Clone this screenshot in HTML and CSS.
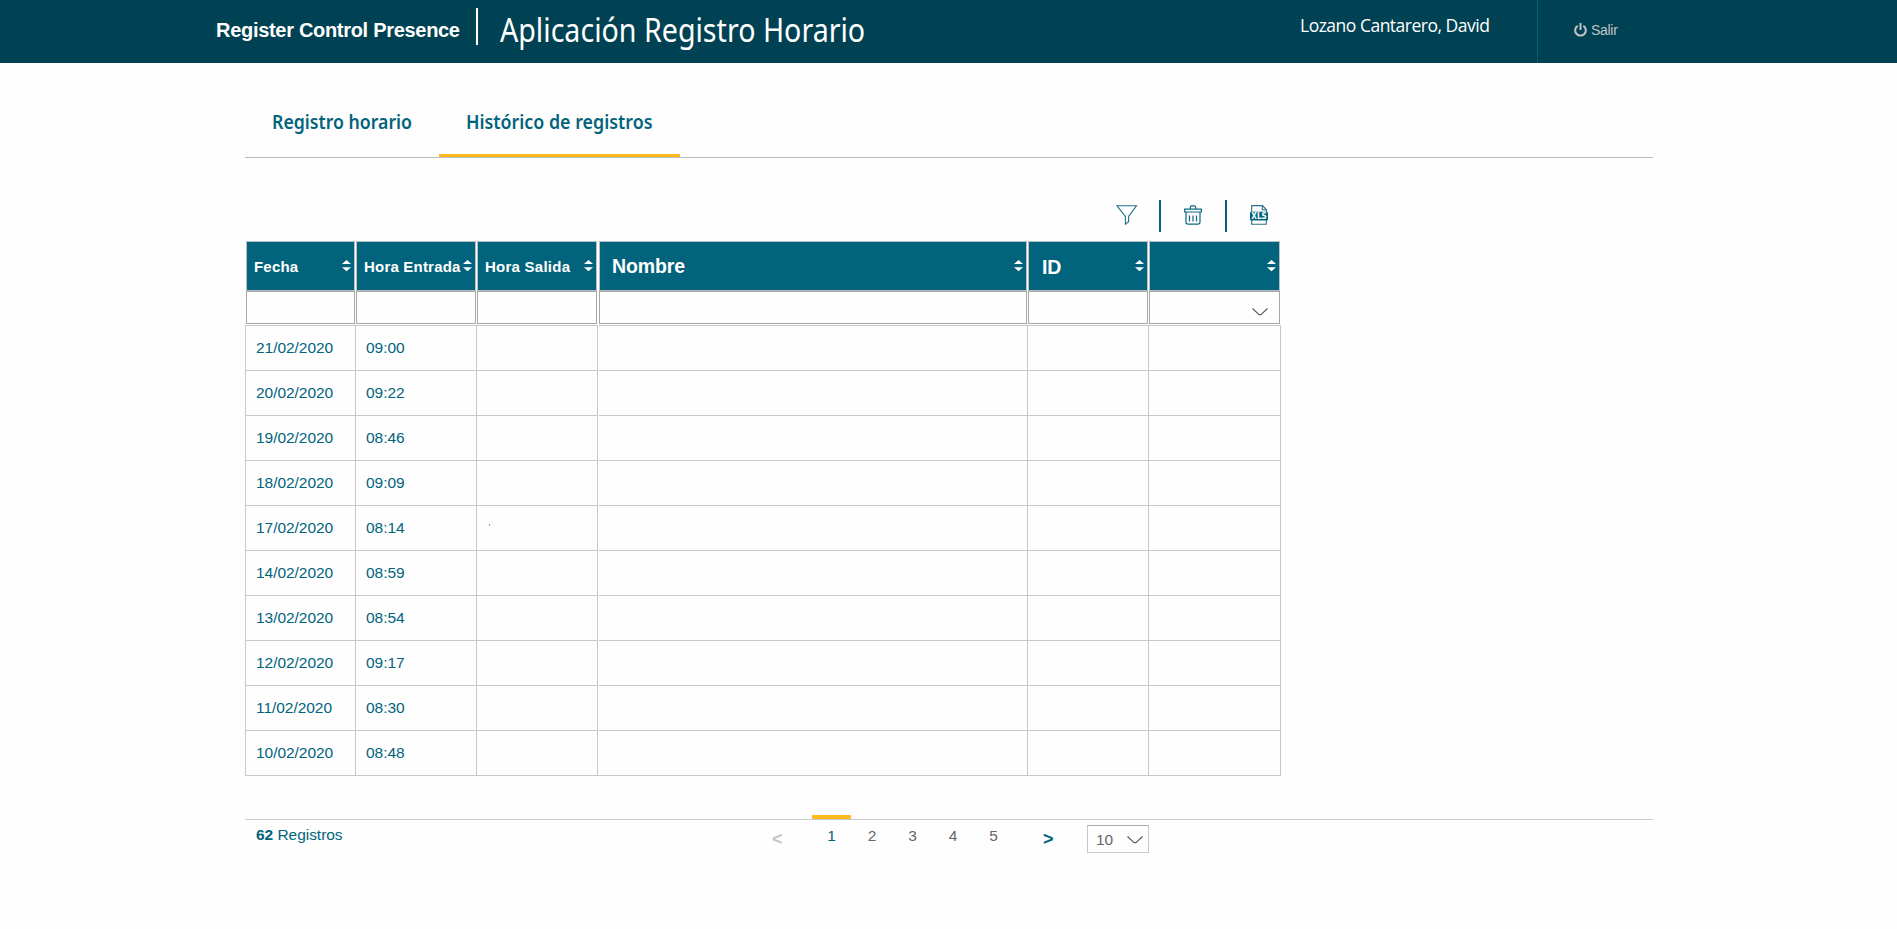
FILE: index.html
```html
<!DOCTYPE html>
<html lang="es">
<head>
<meta charset="utf-8">
<title>Aplicación Registro Horario</title>
<link rel="stylesheet" href="styles.css">
</head>
<body>
<svg class="defs" width="0" height="0">
  <symbol id="sort" viewBox="0 0 9 12"><path d="M0 4 4.500 0 9 4ZM0 7.200H9L4.500 11.200Z" fill="#fff"/></symbol>
  <symbol id="chev" viewBox="0 0 16 8"><path d="M.5.5 6.500 6.200Q8 7.400 9.500 6.200L15.500.5" fill="none" stroke="#555" stroke-width="1.100"/></symbol>
</svg>
<header class="top">
  <div class="brand">Register Control Presence</div>
  <div class="bar"></div>
  <h1 class="title">Aplicación Registro Horario</h1>
  <div class="user">Lozano Cantarero, David</div>
  <div class="exit">
    <svg width="13" height="14" viewBox="0 0 13 14" fill="none" stroke="#c0c4c6" stroke-width="2"><path d="M3.700 2.800A5.300 5.300 0 1 0 9.300 2.800M6.500 0V7"/></svg>
    <span>Salir</span>
  </div>
</header>
<main class="page">
  <nav class="tabs">
    <div class="tab first"><span>Registro horario</span></div>
    <div class="tab active"><span>Histórico de registros</span></div>
  </nav>
  <div class="tools">
    <svg class="filter" width="22" height="20" viewBox="0 0 22 20" fill="none" stroke="#1d6f88" stroke-width="1.100"><path d="M1 .8H20.500L12.600 11.500V16.800L9.400 19.200V11.500Z"/></svg>
    <i></i>
    <svg width="18" height="20" viewBox="0 0 18 20" fill="none" stroke="#0b6780" stroke-width="1.200"><path d="M6.300 4V2.200Q6.300.8 7.600.8H10.400Q11.700.8 11.700 2.200V4M.7 4.200H17.300V7H.7ZM2 7V17Q2 19.200 4.200 19.200H13.800Q16 19.200 16 17V7M5.500 10.500V16.500M9 10.500V16.500M12.500 10.500V16.500"/></svg>
    <i></i>
    <svg width="18" height="20" viewBox="0 0 18 20"><path d="M1.700 7V.6H12.500L16.300 4.500V7M12.300.8V4.700H16.200M1.700 15V19.300H16.300V15" fill="none" stroke="#2b7288" stroke-width="1.100"/><rect y="6.700" width="18" height="8.800" rx="1.200" fill="#02647c"/><text class="xls" x="9" y="14" text-anchor="middle">XLS</text></svg>
  </div>
  <section class="grid">
    <div class="head">
      <div><b>Fecha</b><svg><use href="#sort"/></svg></div>
      <div><b>Hora Entrada</b><svg><use href="#sort"/></svg></div>
      <div><b class="salida">Hora Salida</b><svg><use href="#sort"/></svg></div>
      <div class="big"><b>Nombre</b><svg><use href="#sort"/></svg></div>
      <div class="big id"><b>ID</b><svg><use href="#sort"/></svg></div>
      <div><svg><use href="#sort"/></svg></div>
    </div>
    <div class="head search">
      <div></div><div></div><div></div><div></div><div></div>
      <div><svg class="chev"><use href="#chev"/></svg></div>
    </div>
    <div class="rows">
      <div class="row"><div>21/02/2020</div><div>09:00</div><div></div><div></div><div></div><div></div></div>
      <div class="row"><div>20/02/2020</div><div>09:22</div><div></div><div></div><div></div><div></div></div>
      <div class="row"><div>19/02/2020</div><div>08:46</div><div></div><div></div><div></div><div></div></div>
      <div class="row"><div>18/02/2020</div><div>09:09</div><div></div><div></div><div></div><div></div></div>
      <div class="row"><div>17/02/2020</div><div>08:14</div><div><em class="speck"></em></div><div></div><div></div><div></div></div>
      <div class="row"><div>14/02/2020</div><div>08:59</div><div></div><div></div><div></div><div></div></div>
      <div class="row"><div>13/02/2020</div><div>08:54</div><div></div><div></div><div></div><div></div></div>
      <div class="row"><div>12/02/2020</div><div>09:17</div><div></div><div></div><div></div><div></div></div>
      <div class="row"><div>11/02/2020</div><div>08:30</div><div></div><div></div><div></div><div></div></div>
      <div class="row"><div>10/02/2020</div><div>08:48</div><div></div><div></div><div></div><div></div></div>
    </div>
  </section>
  <footer class="foot">
    <div class="count"><b>62</b> Registros</div>
    <div class="arrow prev">&lt;</div>
    <div class="pages"><span class="on">1</span><span>2</span><span>3</span><span>4</span><span>5</span></div>
    <div class="arrow next">&gt;</div>
    <div class="size"><span>10</span><svg class="chev"><use href="#chev"/></svg></div>
  </footer>
</main>
</body>
</html>
```
FILE: styles.css
```css
* { box-sizing: border-box; }
body { margin: 0; height: 929px; overflow: hidden; background: #fefefe; color: #02647c; font-family: "Liberation Sans", Arial, sans-serif; font-size: 15.5px; letter-spacing: -.04px; }
svg { display: block; flex: none; }
.defs { position: absolute; }

.top { display: flex; height: 63px; padding-left: 216px; background: #004253; color: #fff; white-space: nowrap; }
.brand { width: 260px; padding-top: 18px; font-size: 20px; line-height: 24px; font-weight: bold; letter-spacing: -.3px; }
.bar { width: 2px; height: 37px; margin-top: 8px; background: #fff; }
.title { width: 801px; margin: 0; padding: 8px 0 0 22px; font: 400 32px/44px "Noto Sans", sans-serif; letter-spacing: 0; transform: scaleX(.894); transform-origin: 22px 0; }
.user { width: 258px; padding: 13px 0 0 21px; font: 17.5px/24px "Open Sans", sans-serif; letter-spacing: -.5px; }
.exit { display: flex; gap: 4px; padding: 23px 0 0 36px; border-left: 1px solid #075e73; color: #c0c4c6; font-size: 14px; line-height: 15px; letter-spacing: -.3px; }

.page { width: 1408px; margin-left: 245px; }
.tabs { display: flex; height: 95px; border-bottom: 1px solid #bbb; font: 600 20.5px/28px "Noto Sans", sans-serif; letter-spacing: 0; white-space: nowrap; }
.tab { height: 94px; padding-top: 44px; border-bottom: 3px solid transparent; }
.tab span { display: inline-block; transform: scaleX(.863); transform-origin: 0 0; }
.first { width: 194px; padding-left: 27px; }
.active { width: 241px; padding-left: 27px; border-color: #fdbb20; }
.active span { transform: scaleX(.87); }

.tools { display: flex; align-items: center; width: 1036px; height: 32px; margin-top: 42px; padding: 0 13px 2px 0; justify-content: flex-end; }
.tools i { width: 2px; height: 32px; margin: 0 23px; background: #02647c; position: relative; top: 1px; }
.tools .filter { margin-right: -2px; }
.xls { font: bold 8px "DejaVu Sans Condensed", "DejaVu Sans", sans-serif; letter-spacing: 0; fill: #fff; }

.grid { width: 1036px; margin-top: 9px; }
.head { display: grid; grid-template-columns: 109px 120px 120px 428px 120px 131px; column-gap: 1px; margin-left: 1px; height: 50px; }
.head div { display: flex; align-items: center; justify-content: flex-end; border: 1px solid #b9bdc4; background: #02647c; color: #fff; padding: 0 3px 1px 7px; white-space: nowrap; }
.head div:nth-child(n+4) { position: relative; left: 1px; }
.head b { margin-right: auto; font-size: 15px; letter-spacing: .2px; padding-top: 1px; }
.head .salida { letter-spacing: .25px; }
.head .big { padding-left: 12px; }
.head .id { padding-left: 13px; }
.head .big b { font-size: 19.5px; letter-spacing: -.1px; padding-top: 2px; }
.head .id b { padding-top: 3px; }
.head svg { width: 9px; height: 12px; }
.search { height: 33px; }
.head.search div { border-color: #a6a6a6; background: #fefefe; }
.head .chev, .chev { width: 16px; height: 8px; }
.search .chev { margin: 9px 8px 0 0; }

.rows { margin-top: 1px; border-bottom: 1px solid #c8c8c8; }
.row { display: grid; grid-template-columns: 110px 121px 122px 1px 428px 121px 133px; height: 45px; line-height: 44px; }
.row div { border-top: 1px solid #c8c8c8; border-left: 1px solid #c8c8c8; padding-left: 10px; }
.row div:nth-child(3), .row div:nth-child(6) { border-right: 1px solid #c8c8c8; }
.row div:nth-child(4) { grid-column: 5; border-left: 0; }
.speck { display: block; width: 1px; height: 2px; margin: 18px 0 0 2px; background: #c09a86; }

.foot { display: flex; height: 34px; margin-top: 43px; border-top: 1px solid #c8c8c8; color: #666; line-height: 18px; }
.count { width: 527px; padding: 6px 0 0 11px; color: #02647c; }
.arrow { width: 40px; padding-top: 10px; font-size: 18px; font-weight: bold; }
.prev { color: #c2c6c9; }
.next { width: 44px; color: #02647c; }
.pages { display: flex; gap: 1.500px; width: 231px; }
.pages span { width: 39px; padding-top: 7px; text-align: center; }
.pages .on { margin-top: -5px; padding-top: 8px; border-top: 4px solid #fdbb20; height: 30px; color: #02647c; }
.size { display: flex; justify-content: space-between; width: 62px; height: 28px; margin-top: 5px; padding: 5px 5px 0 8px; border: 1px solid #c8c8c8; border-top-color: #aaa; }
.size .chev { margin-top: 5px; }
```
